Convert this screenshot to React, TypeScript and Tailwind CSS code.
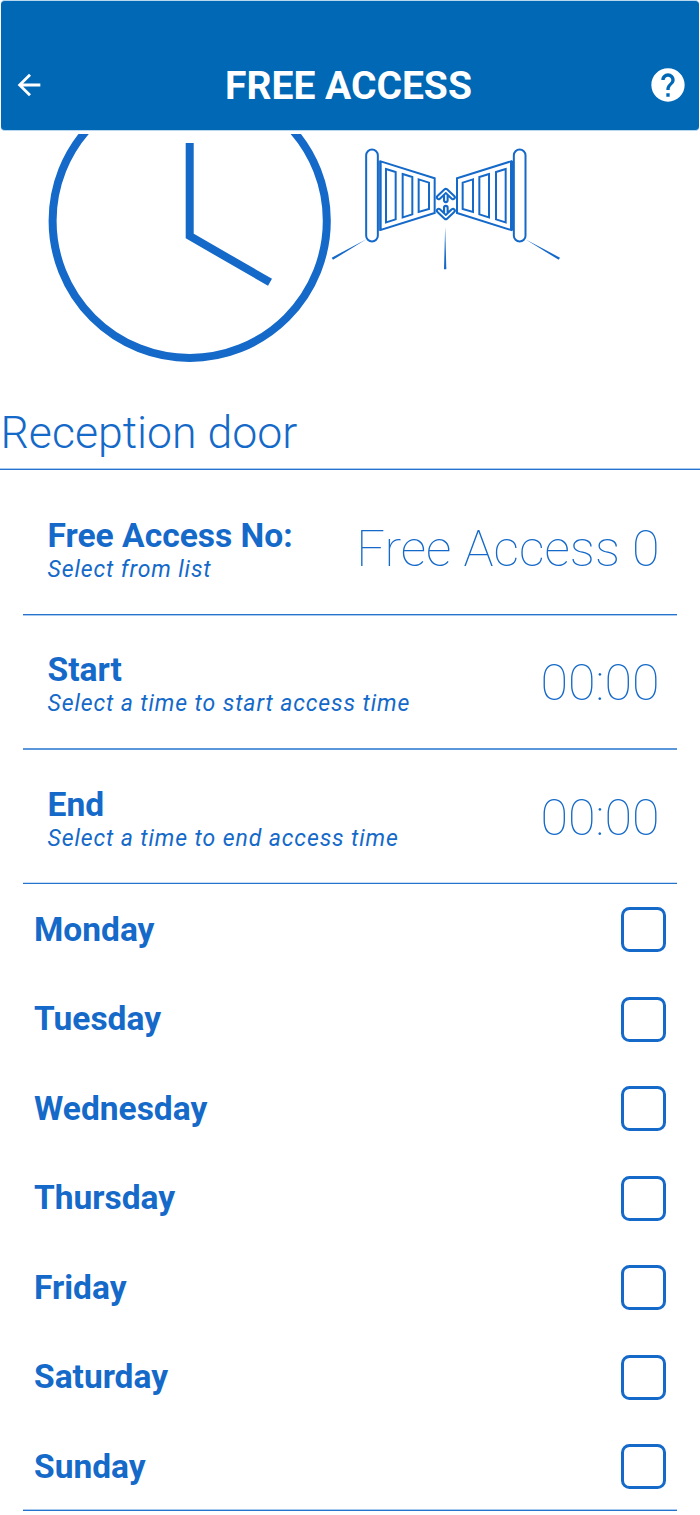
import React, { useState } from "react";

const SETTINGS = [
  {
    title: "Free Access No:",
    hint: "Select from list",
    value: "Free Access 0",
    row: "h-[145px] pt-[17px] border-b border-[#2473cd] shadow-[0_1px_0_#a9c9ee]",
  },
  {
    title: "Start",
    hint: "Select a time to start access time",
    value: "00:00",
    row: "h-[135px] pt-[6px] border-b-2 border-[#5a96da]",
  },
  {
    title: "End",
    hint: "Select a time to end access time",
    value: "00:00",
    row: "h-[134px] pt-[5px] border-b border-[#2473cd] shadow-[inset_0_-1px_0_#c9def5]",
  },
];

const DAYS = [
  "Monday",
  "Tuesday",
  "Wednesday",
  "Thursday",
  "Friday",
  "Saturday",
  "Sunday",
];

function ClockArt() {
  return (
    <svg className="h-[230px] w-[283px] shrink-0" viewBox="48 134 283 230" fill="none" stroke="#1469c9">
      <circle cx="189.7" cy="220.8" r="137.1" strokeWidth="8" />
      <path d="M189.7 143V236L270 282.3" strokeWidth="8" />
    </svg>
  );
}

function GateArt() {
  return (
    <svg className="h-[140px] w-[230px] shrink-0" viewBox="18 12 690 420" fill="none" stroke="#1469c9" strokeWidth="6">
      {/* posts */}
      <rect x="123.500" y="58.500" width="35" height="276" rx="17.500" />
      <rect x="566.500" y="58.500" width="35" height="276" rx="17.500" />

      {/* left leaf */}
      <path d="M167 94L329 145V249L167 300Z" />
      <path d="M162.500 92V302" strokeWidth="4" />
      <path d="M183 117L212 126V268L183 277Z" />
      <path d="M233 132L262 141V253L233 262Z" />
      <path d="M281 148L312 158V237L281 246Z" />

      {/* right leaf */}
      <path d="M558 94L396 145V249L558 300Z" />
      <path d="M562.500 92V302" strokeWidth="4" />
      <path d="M542 117L513 126V268L542 277Z" />
      <path d="M492 132L463 141V253L492 262Z" />
      <path d="M444 148L413 158V237L444 246Z" />

      {/* outlined arrows */}
      <g strokeLinecap="round" strokeLinejoin="round">
        <path d="M362.500 211V184M341 202L362.500 182L384 202" strokeWidth="17" />
        <path d="M362.500 211V196M341 202L362.500 182L384 202" stroke="#fff" strokeWidth="4.500" />
        <path d="M362.500 233V260M341 242L362.500 262L384 242" strokeWidth="17" />
        <path d="M362.500 233V248M341 242L362.500 262L384 242" stroke="#fff" strokeWidth="4.500" />
      </g>

      {/* tapered floor lines */}
      <g fill="#1469c9" stroke="none">
        <path d="M124 328L20 383L24 389.500Z" />
        <path d="M360.500 290L357 418H364Z" />
        <path d="M601 328L705 383L701 389.500Z" />
      </g>
    </svg>
  );
}

function Header() {
  return (
    <header className="h-[131px] bg-white">
      <div className="mx-px flex h-[131px] items-end justify-between rounded-[4px] border-y border-[#b8d8f0] bg-[#0068b4] pb-[25px] pl-[11px] pr-[11px]">
        <button aria-label="Back" className="flex h-10 w-10 items-center">
          <svg className="h-[34px] w-[34px]" viewBox="0 0 24 24" fill="#fff">
            <path d="M20 11H7.830l5.590-5.590L12 4l-8 8 8 8 1.410-1.410L7.830 13H20v-2z" />
          </svg>
        </button>
        <h1 className="pr-[3px] text-[39px] font-bold leading-[38px] text-white">
          FREE ACCESS
        </h1>
        <button aria-label="Help" className="flex h-10 w-10 items-center">
          <svg className="h-10 w-10" viewBox="0 0 24 24" fill="#fff">
            <path d="M12 2C6.480 2 2 6.480 2 12s4.480 10 10 10 10-4.480 10-10S17.520 2 12 2zm1 17h-2v-2h2v2zm2.070-7.750l-.9.920C13.450 12.900 13 13.500 13 15h-2v-.5c0-1.100.45-2.100 1.170-2.830l1.240-1.260c.37-.36.590-.86.590-1.410 0-1.100-.9-2-2-2s-2 .9-2 2H8c0-2.210 1.790-4 4-4s4 1.790 4 4c0 .88-.36 1.680-.93 2.250z" />
          </svg>
        </button>
      </div>
    </header>
  );
}

export default function App() {
  const [checked, setChecked] = useState<string[]>([]);

  const toggle = (day: string) =>
    setChecked((prev) =>
      prev.includes(day) ? prev.filter((d) => d !== day) : [...prev, day]
    );

  return (
    <div className="h-[1515px] w-[700px] overflow-hidden bg-white font-['Roboto',sans-serif] text-[#1469c9]">
      <Header />

      {/* illustration, partly scrolled under the header */}
      <div className="mt-[3px] flex h-[266px] items-start pl-12">
        <ClockArt />
        <GateArt />
      </div>

      <h2 className="h-[70px] border-b border-[#2473cd] pl-[0.500px] pt-[6px] text-[44.600px] font-light leading-[54px] shadow-[inset_0_-1px_0_#a9c9ee]">
        Reception door
      </h2>

      <div className="pl-[22.500px] pr-[23px]">
        {SETTINGS.map((item) => (
          <div
            key={item.title}
            className={`flex items-center justify-between pl-[25px] pr-[17.500px] ${item.row}`}
          >
            <div>
              <p className="text-[33.600px] font-bold leading-[38px]">{item.title}</p>
              <p className="text-[23px] italic leading-[29px] tracking-[0.900px]">
                {item.hint}
              </p>
            </div>
            <p className="pb-[3px] text-[50.300px] font-thin leading-[60px]">
              {item.value}
            </p>
          </div>
        ))}

        <div className="h-[627px] border-b border-[#2473cd] pt-px shadow-[inset_0_-1px_0_#a9c9ee]">
          {DAYS.map((day) => (
            <label
              key={day}
              className="flex h-[89.500px] items-center justify-between pl-[11.500px] pr-[11px]"
            >
              <span className="text-[33.500px] font-bold leading-[40px]">{day}</span>
              <input
                type="checkbox"
                checked={checked.includes(day)}
                onChange={() => toggle(day)}
                className="h-[45px] w-[45px] appearance-none rounded-[8.500px] border-[3px] border-[#1469c9] bg-white checked:bg-[#1469c9]"
              />
            </label>
          ))}
        </div>
      </div>
    </div>
  );
}
